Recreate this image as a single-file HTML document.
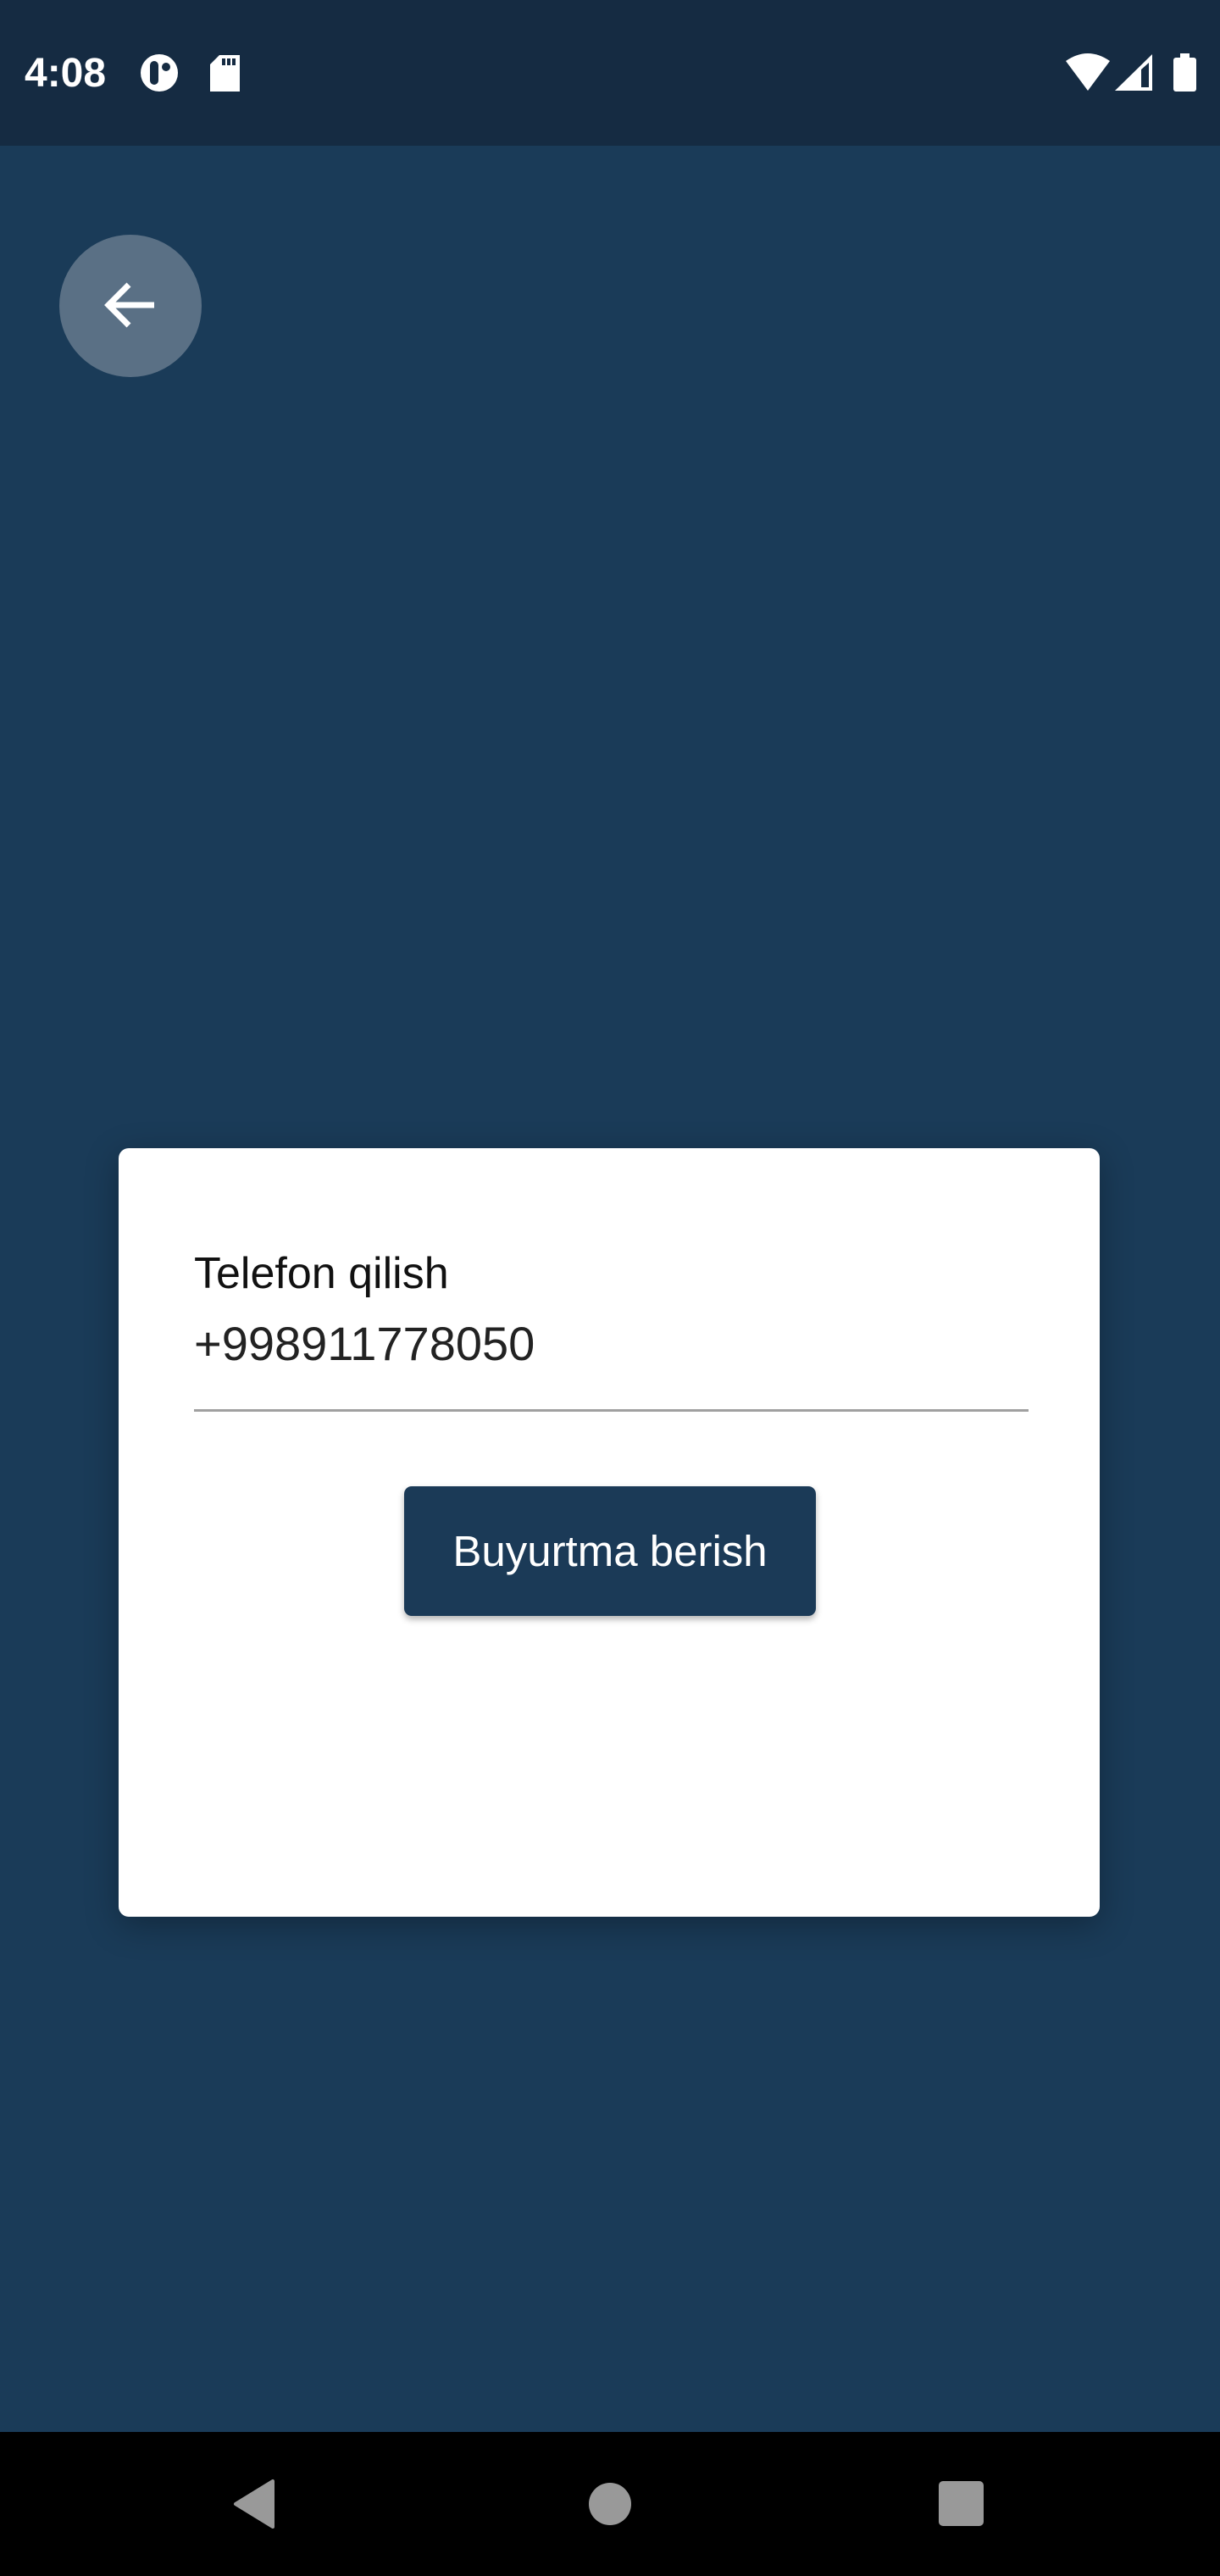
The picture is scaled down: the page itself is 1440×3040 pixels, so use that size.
<!DOCTYPE html>
<html><head><meta charset="utf-8"><style>
html,body{margin:0;padding:0}
body{width:1440px;height:3040px;position:relative;overflow:hidden;background:#1a3b58;font-family:"Liberation Sans",sans-serif}
.status{position:absolute;left:0;top:0;width:1440px;height:172px;background:#152b42}
.time{position:absolute;left:29px;top:61px;font-size:48px;font-weight:bold;color:#fff;line-height:52px}
.back{position:absolute;left:70px;top:277px;width:168px;height:168px;border-radius:50%;background:#5a7085}
.card{position:absolute;left:140px;top:1355px;width:1158px;height:907px;background:#fff;border-radius:12px;box-shadow:0 10px 40px rgba(0,0,0,.3)}
.label{position:absolute;left:89px;top:118px;font-size:52px;color:#111}
.phone{position:absolute;left:89px;top:198px;font-size:56px;color:#222}
.line{position:absolute;left:89px;top:308px;width:985px;height:3px;background:#a0a0a0}
.btn{position:absolute;left:337px;top:399px;width:486px;height:153px;background:#1b3a57;border-radius:9px;box-shadow:0 4px 8px rgba(0,0,0,.3);color:#fff;font-size:51px;text-align:center;line-height:153px}
.nav{position:absolute;left:0;top:2870px;width:1440px;height:170px;background:#000}
</style></head><body>
<div class="status">
<div class="time">4:08</div>
<svg style="position:absolute;left:164px;top:64px" width="50" height="44" viewBox="0 0 50 44"><circle cx="24" cy="22" r="22" fill="#fff"/><rect x="13" y="8" width="10" height="28" rx="5" fill="#152b42"/><circle cx="32" cy="15" r="5" fill="#152b42"/></svg>
<svg style="position:absolute;left:247px;top:64px" width="38" height="46" viewBox="0 0 38 46"><path d="M12 1H36V44H1V12Z" fill="#fff"/><rect x="15" y="5" width="4" height="8" fill="#152b42"/><rect x="21" y="5" width="4" height="8" fill="#152b42"/><rect x="27" y="5" width="4" height="8" fill="#152b42"/></svg>
<svg style="position:absolute;left:1256px;top:62px" width="160" height="48" viewBox="0 0 160 48"><path d="M2 10Q28 -8 54 10L28 45Z" fill="#fff"/><path d="M60 45L104 2V45Z" fill="#fff"/><path d="M91 20V41H100V12Z" fill="#152b42"/><rect x="129" y="6" width="27" height="40" rx="3" fill="#fff"/><rect x="137" y="1" width="11" height="7" fill="#fff"/></svg>
</div>
<div class="back"><svg width="168" height="168" viewBox="0 0 168 168"><path d="M112 83H60M82 59L58 83L82 107" stroke="#fff" stroke-width="7" fill="none"/></svg></div>
<div class="card">
<div class="label">Telefon qilish</div>
<div class="phone">+998911778050</div>
<div class="line"></div>
<div class="btn">Buyurtma berish</div>
</div>
<div class="nav">
<svg style="position:absolute;left:270px;top:55px" width="60" height="60" viewBox="0 0 60 60"><path d="M52 3V57L8 30Z" fill="#999" stroke="#999" stroke-width="4" stroke-linejoin="round"/></svg>
<div style="position:absolute;left:695px;top:60px;width:50px;height:50px;border-radius:50%;background:#999"></div>
<div style="position:absolute;left:1108px;top:58px;width:53px;height:53px;border-radius:5px;background:#999"></div>
</div>
</body></html>
